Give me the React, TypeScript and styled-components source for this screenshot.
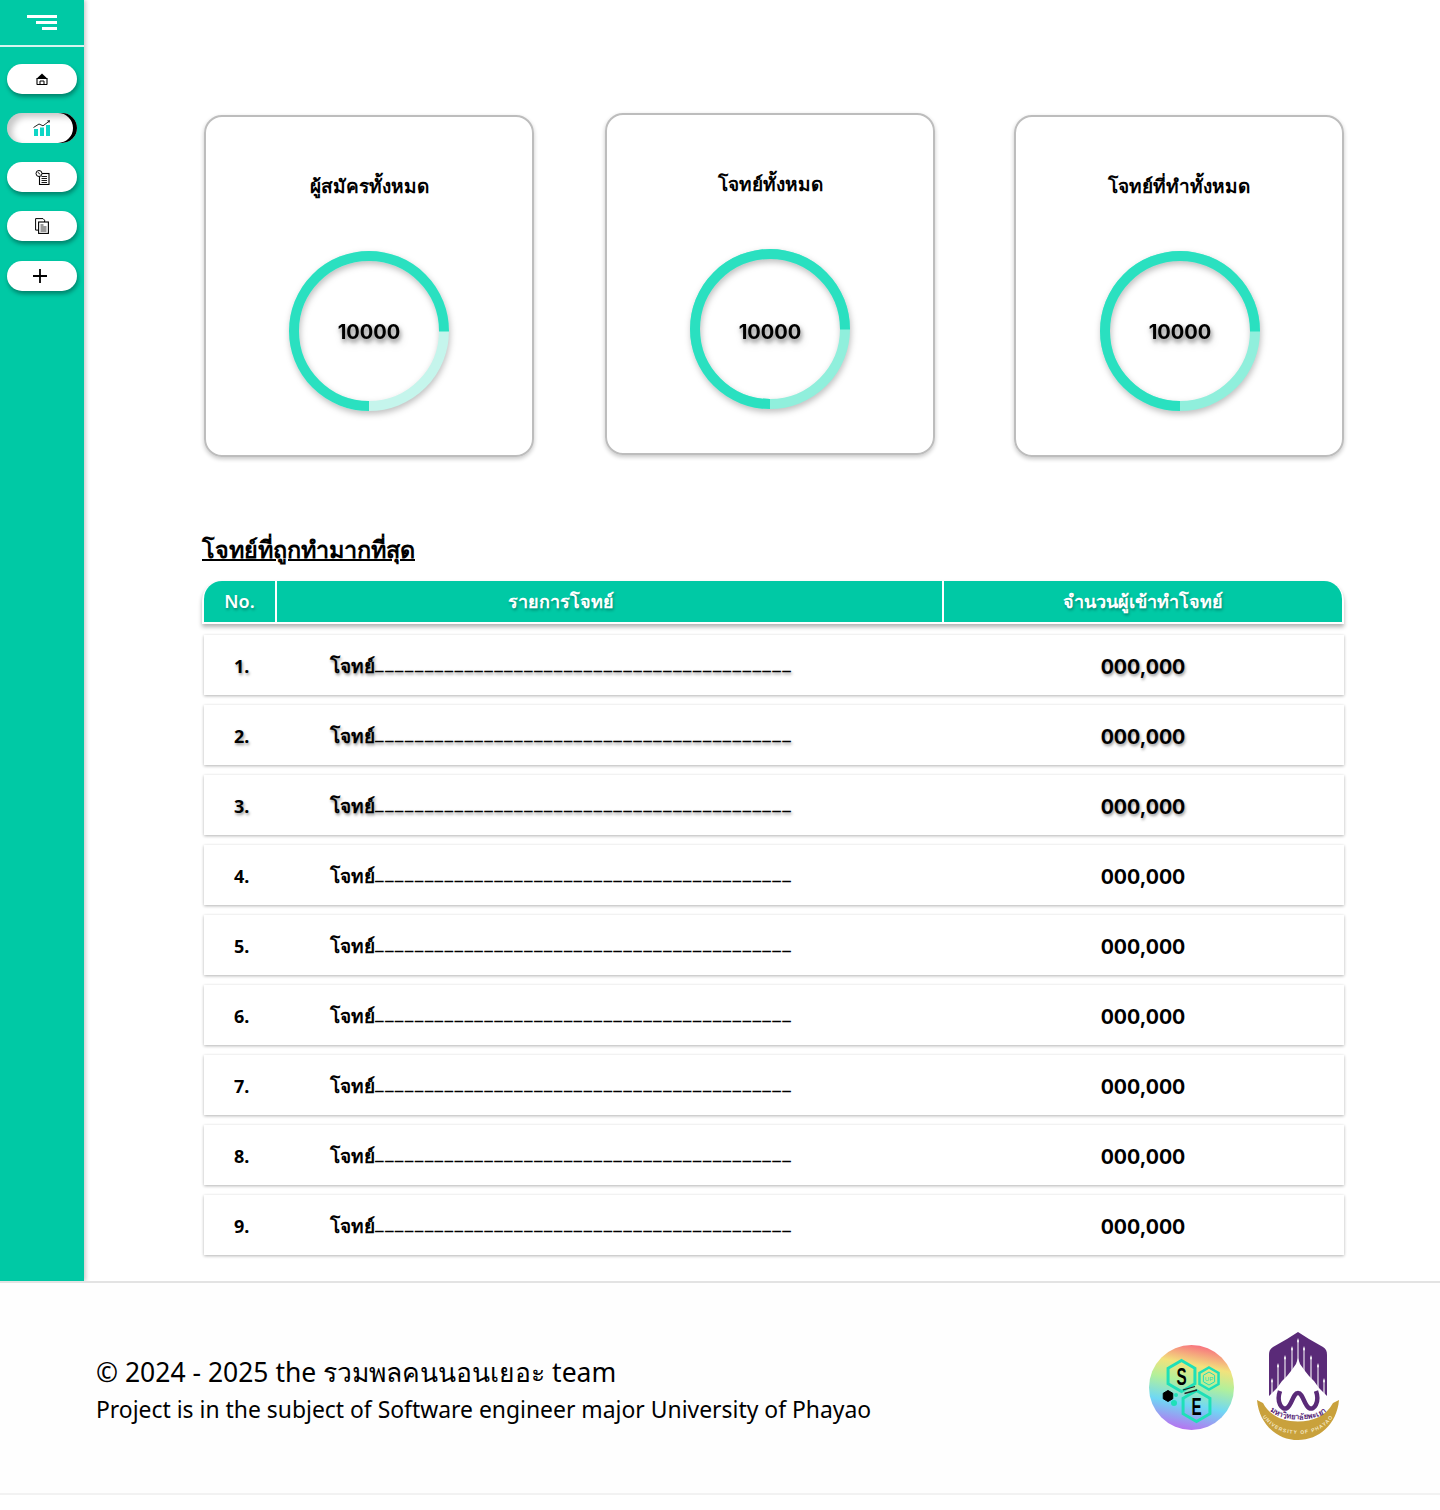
import React from "react";
import styled, { createGlobalStyle } from "styled-components";

const FONT = `"Noto Sans", "Inter", "Liberation Sans", sans-serif`;
const DIGITS = `"Inter", "Noto Sans", sans-serif`;

const Global = createGlobalStyle`
  html, body { margin: 0; padding: 0; background: #fff; }
  * { box-sizing: border-box; }
  body { font-family: ${FONT}; color: #000; }
`;

const Page = styled.div`
  width: 1440px;
  height: 1510px;
  display: flex;
  flex-direction: column;
  background: #fff;
`;
const Top = styled.div`
  display: flex;
  height: 1281px;
  flex: none;
`;
const Sidebar = styled.aside`
  width: 84px;
  flex: none;
  background: #00c9a5;
  box-shadow: 2px 0 4px rgba(0, 0, 0, 0.2);
  display: flex;
  flex-direction: column;
  align-items: center;
`;
const Burger = styled.div`
  width: 100%;
  height: 47px;
  flex: none;
  border-bottom: 2.5px solid #d5f5ef;
  display: flex;
  flex-direction: column;
  align-items: flex-end;
  padding: 15px 27px 0 0;
  gap: 3.5px;
`;
const BurgerLine = styled.span<{ $w: number }>`
  display: block;
  height: 2.5px;
  width: ${(p) => p.$w}px;
  background: #fff;
`;
const NavList = styled.nav`
  display: flex;
  flex-direction: column;
  padding-top: 17px;
  gap: 19px;
`;
const NavButton = styled.div<{ $active?: boolean; $nudge?: number; $iconLeft?: number }>`
  width: 70px;
  height: 30px;
  border-radius: 15px;
  background: #fff;
  display: flex;
  align-items: center;
  justify-content: center;
  margin-top: ${(p) => p.$nudge ?? 0}px;
  padding-right: ${(p) => p.$iconLeft ?? 0}px;
  box-shadow: ${(p) =>
    p.$active
      ? "inset 5px 4px 6px rgba(0,0,0,0.22), inset -4px 0 0 #000"
      : "1px 3px 4px rgba(0,0,0,0.35)"};
`;
const Main = styled.main`
  flex: 1;
  padding: 113px 96px 0 120px;
`;
const Cards = styled.div`
  display: flex;
  height: 344px;
  align-items: flex-start;
`;
const Card = styled.section<{ $lift?: boolean; $left: number }>`
  width: 330px;
  flex: none;
  height: 342px;
  margin-top: ${(p) => (p.$lift ? 0 : 2)}px;
  margin-left: ${(p) => p.$left}px;
  border: 2px solid #bdbdbd;
  border-radius: 18px;
  box-shadow: 0 2px 4px rgba(0, 0, 0, 0.22);
  display: flex;
  flex-direction: column;
  align-items: center;
  padding-top: 55px;
`;
const CardTitle = styled.h3`
  margin: 0;
  font: 600 19px/28px ${FONT};
  height: 28px;
`;
const Ring = styled.div<{ $shift?: number }>`
  position: relative;
  width: 160px;
  height: 160px;
  margin-top: 51px;
  margin-left: ${(p) => p.$shift ?? 0}px;
  display: flex;
  align-items: center;
  justify-content: center;
  filter: drop-shadow(1px 3px 3px rgba(0, 0, 0, 0.25));
`;
const RingSvg = styled.svg`
  position: absolute;
  inset: 0;
`;
const RingValue = styled.span<{ $drop?: boolean }>`
  font: 700 20px/24px ${DIGITS};
  margin-top: ${(p) => (p.$drop ? 6 : 2)}px;
  text-shadow: 1px 3px 4px rgba(0, 0, 0, 0.35);
`;
const Heading = styled.h2`
  margin: 74px 0 0 -2px;
  font: 600 23.4px/36px ${FONT};
  text-decoration: underline;
  text-decoration-thickness: 2px;
  height: 36px;
`;
const TableHead = styled.div`
  display: grid;
  grid-template-columns: 71px 2px 665px 2px 1fr;
  width: 1142px;
  height: 43px;
  margin: 14px 0 0 -2px;
  border: solid #fff;
  border-width: 0 2px 2px;
  border-radius: 20px 20px 0 0;
  box-shadow: 0 3px 4px rgba(0, 0, 0, 0.3);
  background: #fff;
`;
const HeadCell = styled.div<{ $pos?: "first" | "last"; $inset?: number }>`
  height: 41px;
  background: #00c9a5;
  color: #fff;
  display: flex;
  align-items: center;
  justify-content: center;
  padding: 0 ${(p) => p.$inset ?? 0}px 2px 0;
  font: 600 18px/28px ${FONT};
  text-shadow: 1px 2px 3px rgba(0, 0, 0, 0.3);
  border-top-left-radius: ${(p) => (p.$pos === "first" ? 18 : 0)}px;
  border-top-right-radius: ${(p) => (p.$pos === "last" ? 18 : 0)}px;
`;
const Gap = styled.div``;
const Rows = styled.div`
  display: flex;
  flex-direction: column;
  gap: 10px;
  margin: 11px 0 0 0;
  width: 1140px;
`;
const Row = styled.div<{ $glow: boolean }>`
  height: 60px;
  display: grid;
  grid-template-columns: 126px 600px 1fr;
  align-items: center;
  background: #fff;
  box-shadow: 0 1px 3px rgba(0, 0, 0, 0.3);
  font: 600 19px/28px ${FONT};
  text-shadow: ${(p) => (p.$glow ? "1px 2px 3px rgba(0, 0, 0, 0.4)" : "none")};
`;
const RowNo = styled.div`
  padding: 2px 0 0 30px;
  font: 700 18px/28px ${FONT};
`;
const RowTitle = styled.div`
  white-space: nowrap;
  padding-bottom: 3px;
`;
const Dashes = styled.span`
  font-size: 21px;
  letter-spacing: 1.3px;
  font-weight: 700;
  vertical-align: 4px;
`;
const RowCount = styled.div`
  text-align: center;
  padding: 4px 0 0 12px;
  font: 700 19.6px/28px ${DIGITS};
`;
const Footer = styled.footer`
  height: 214px;
  flex: none;
  border-top: 2px solid #e3e3e3;
  border-bottom: 2px solid #f2f2f2;
  background: #fefefe;
  display: flex;
  align-items: center;
  justify-content: space-between;
  padding: 0 101px 0 96px;
`;
const FooterText = styled.div`
  display: flex;
  flex-direction: column;
  margin-top: 6px;
`;
const FooterMain = styled.div`
  font: 400 26.5px/38px ${FONT};
`;
const FooterSub = styled.div`
  font: 400 22.9px/38px ${FONT};
`;
const Logos = styled.div`
  display: flex;
  align-items: center;
  gap: 23px;
  margin-bottom: 2px;
`;

const HomeIcon = () => (
  <svg width="12" height="12" viewBox="0 0 12 12" fill="none">
    <path d="M1 5.500h10v5.500a.5.5 0 0 1-.5.5h-9a.5.5 0 0 1-.5-.5z" stroke="#000" strokeWidth="1.100" />
    <path d="M0.500 5.800 6 .5l5.500 5.300z" fill="#000" />
    <path d="M4 11.500V8h4v3.500" stroke="#000" strokeWidth="1" />
  </svg>
);
const ChartIcon = () => (
  <svg width="18" height="16" viewBox="0 0 18 16" fill="none">
    <rect x="1" y="9" width="4" height="7" fill="#0fd6c6" />
    <rect x="7" y="7.500" width="4" height="8.500" fill="#0fd6c6" />
    <rect x="13" y="5" width="4" height="11" fill="#0fd6c6" />
    <path d="M0.500 7.500 6 4l4 1.800L16.500 1" stroke="#222" strokeWidth="1" />
    <path d="m14 .6 3-.3-.7 2.800z" fill="#222" />
  </svg>
);
const ReportIcon = () => (
  <svg width="15" height="15" viewBox="0 0 15 15" fill="none" stroke="#000">
    <rect x="4.500" y="3.500" width="9.500" height="11" fill="#fff" strokeWidth="1.100" />
    <path d="M6.500 6.500h5.500M6.500 8.500h5.500M6.500 10.500h5.500M6.500 12.500h5.500" strokeWidth="0.900" />
    <circle cx="4" cy="3.500" r="3" fill="#fff" strokeWidth="1" />
    <path d="M3 2.200 5 4.500" strokeWidth="1" />
  </svg>
);
const CopyIcon = () => (
  <svg width="14" height="16" viewBox="0 0 14 16" fill="none" stroke="#000">
    <path d="M0.600 12.100V.6h7.400l1.600 1.600v10z" fill="#fff" strokeWidth="1" />
    <rect x="3.600" y="4" width="9.800" height="11.400" fill="#fff" strokeWidth="1.100" />
    <path d="M5.500 7h3M5.500 9h6M5.500 11h6M5.500 13h6" strokeWidth="0.800" />
  </svg>
);
const PlusIcon = () => (
  <svg width="14" height="14" viewBox="0 0 14 14">
    <path d="M7 0v14M0 7h14" stroke="#000" strokeWidth="1.800" />
  </svg>
);

const ProgressRing = ({ pale, drop, shift }: { pale: string; drop?: boolean; shift?: number }) => {
  const r = 75;
  const c = 2 * Math.PI * r;
  return (
    <Ring $shift={shift}>
      <RingSvg width="160" height="160" viewBox="0 0 160 160" fill="none">
        <circle cx="80" cy="80" r={r} stroke={pale} strokeWidth="10" />
        <circle
          cx="80"
          cy="80"
          r={r}
          stroke="#2ae0c0"
          strokeWidth="10"
          strokeDasharray={`${c * 0.75} ${c}`}
          transform="rotate(90 80 80)"
        />
      </RingSvg>
      <RingValue $drop={drop}>10000</RingValue>
    </Ring>
  );
};

const Hex = ({ cx, cy, r, stroke, fill, sw }: { cx: number; cy: number; r: number; stroke: string; fill: string; sw: number }) => {
  const pts = Array.from({ length: 6 }, (_, i) => {
    const a = (Math.PI / 3) * i - Math.PI / 2;
    return `${cx + r * Math.cos(a)},${cy + r * Math.sin(a)}`;
  }).join(" ");
  return <polygon points={pts} stroke={stroke} fill={fill} strokeWidth={sw} />;
};

const SELogo = () => (
  <svg width="85" height="85" viewBox="0 0 85 85">
    <defs>
      <linearGradient id="rainbow" x1="0.600" y1="0" x2="0.400" y2="1">
        <stop offset="0" stopColor="#f86f7f" />
        <stop offset="0.24" stopColor="#f2e27c" />
        <stop offset="0.44" stopColor="#b3f09a" />
        <stop offset="0.70" stopColor="#6fd8f4" />
        <stop offset="1" stopColor="#b870f0" />
      </linearGradient>
    </defs>
    <circle cx="42.500" cy="42.500" r="42.500" fill="url(#rainbow)" />
    <Hex cx={32.500} cy={31} r={15.500} stroke="#1ee0b8" fill="none" sw={3} />
    <Hex cx={60} cy={33.500} r={11} stroke="#1ee0b8" fill="none" sw={2.500} />
    <Hex cx={60} cy={33.500} r={6.500} stroke="#1ee0b8" fill="none" sw={1} />
    <Hex cx={47.500} cy={61} r={15.500} stroke="#1ee0b8" fill="none" sw={3} />
    <Hex cx={19} cy={51} r={5.500} stroke="#000" fill="#000" sw={1} />
    <circle cx="27" cy="50" r="2" fill="#1ee0b8" />
    <circle cx="25" cy="58" r="3" fill="#1ee0b8" />
    <path d="M34 45 46 41.500M35.500 48.500 48 45" stroke="#222" strokeWidth="1.300" />
    <text transform="translate(32.500 39.500) scale(0.800 1.250)" textAnchor="middle" fontFamily="Liberation Sans" fontWeight="700" fontSize="19">S</text>
    <text transform="translate(47.500 69.500) scale(0.800 1.250)" textAnchor="middle" fontFamily="Liberation Sans" fontWeight="700" fontSize="19">E</text>
    <text x="60" y="36" textAnchor="middle" fontFamily="Liberation Sans" fontSize="6" fill="#1ee0b8">UP</text>
  </svg>
);

const Spire = ({ x, top, bottom }: { x: number; top: number; bottom: number }) => (
  <path
    d={`M${x} ${top} ${x + 1} ${top + 3} ${x + 0.500} ${top + 5} ${x + 0.600} ${bottom} h-1.200 L${x - 0.500} ${top + 5} ${x - 1} ${top + 3}Z`}
    fill="#fff"
  />
);

const UpLogo = () => (
  <svg width="82" height="110" viewBox="0 0 82 110">
    <defs>
      <path id="thaiArc" d="M9 76C16 84 28 87.500 41 87.500S66 84 73 76" />
      <path id="engArc" d="M4 82C12 96 26 102 41 102S70 96 78 82" />
    </defs>
    <path d="M41 0 52 7 66 15C69 17 70 19 70 23V64H12V23C12 19 13 17 16 15L30 7Z" fill="#5a2a78" />
    {[41, 35, 47, 28, 54, 21, 61, 15, 67].map((x) => {
      const d = Math.abs(x - 41);
      const top = d === 0 ? 6 : d === 6 ? 14 : d === 13 ? 23 : d === 20 ? 31 : 46;
      return <Spire key={x} x={x} top={top} bottom={62} />;
    })}
    <path d="M41 26 43 32 48 39 52 44 57 49 62 56 70 64 H12L20 56 25 49 30 44 34 39 39 32Z" fill="#fff" />
    <path
      d="M23 59C19 70 25 79 30 76C35 73 36 61 41 61C46 61 47 73 52 76C57 79 63 70 59 59"
      fill="none"
      stroke="#5a2a78"
      strokeWidth="4.500"
    />
    <path d="M0 68 6 71C13 84 26 89.500 41 89.500S69 84 76 71L82 68C80 92 62 108 41 108S2 92 0 68Z" fill="#c9a13c" />
    <text fontFamily="Noto Sans" fontWeight="700" fontSize="7.500" fill="#5a2a78">
      <textPath href="#thaiArc" startOffset="50%" textAnchor="middle">มหาวิทยาลัยพะเยา</textPath>
    </text>
    <text fontFamily="Liberation Sans" fontWeight="700" fontSize="5" letterSpacing="1.100" fill="#f3e7c4">
      <textPath href="#engArc" startOffset="50%" textAnchor="middle">UNIVERSITY OF PHAYAO</textPath>
    </text>
  </svg>
);

const rows = [1, 2, 3, 4, 5, 6, 7, 8, 9];
const dashes = "_".repeat(42);

export default function App() {
  return (
    <Page>
      <Global />
      <Top>
        <Sidebar>
          <Burger>
            <BurgerLine $w={30} />
            <BurgerLine $w={21} />
            <BurgerLine $w={15} />
          </Burger>
          <NavList>
            <NavButton><HomeIcon /></NavButton>
            <NavButton $active><ChartIcon /></NavButton>
            <NavButton><ReportIcon /></NavButton>
            <NavButton><CopyIcon /></NavButton>
            <NavButton $nudge={1} $iconLeft={4}><PlusIcon /></NavButton>
          </NavList>
        </Sidebar>
        <Main>
          <Cards>
            <Card $left={0}><CardTitle>ผู้สมัครทั้งหมด</CardTitle><ProgressRing pale="#c5f5ec" /></Card>
            <Card $lift $left={71}><CardTitle>โจทย์ทั้งหมด</CardTitle><ProgressRing pale="#90efdc" drop /></Card>
            <Card $left={79}><CardTitle>โจทย์ที่ทำทั้งหมด</CardTitle><ProgressRing pale="#90efdc" shift={2} /></Card>
          </Cards>
          <Heading>โจทย์ที่ถูกทำมากที่สุด</Heading>
          <TableHead>
            <HeadCell $pos="first">No.</HeadCell>
            <Gap />
            <HeadCell $inset={98}>รายการโจทย์</HeadCell>
            <Gap />
            <HeadCell $pos="last">จำนวนผู้เข้าทำโจทย์</HeadCell>
          </TableHead>
          <Rows>
            {rows.map((n) => (
              <Row key={n} $glow={n <= 3}>
                <RowNo>{n}.</RowNo>
                <RowTitle>โจทย์<Dashes>{dashes}</Dashes></RowTitle>
                <RowCount>000,000</RowCount>
              </Row>
            ))}
          </Rows>
        </Main>
      </Top>
      <Footer>
        <FooterText>
          <FooterMain>© 2024 - 2025 the รวมพลคนนอนเยอะ team</FooterMain>
          <FooterSub>Project is in the subject of Software engineer major University of Phayao</FooterSub>
        </FooterText>
        <Logos>
          <SELogo />
          <UpLogo />
        </Logos>
      </Footer>
    </Page>
  );
}
